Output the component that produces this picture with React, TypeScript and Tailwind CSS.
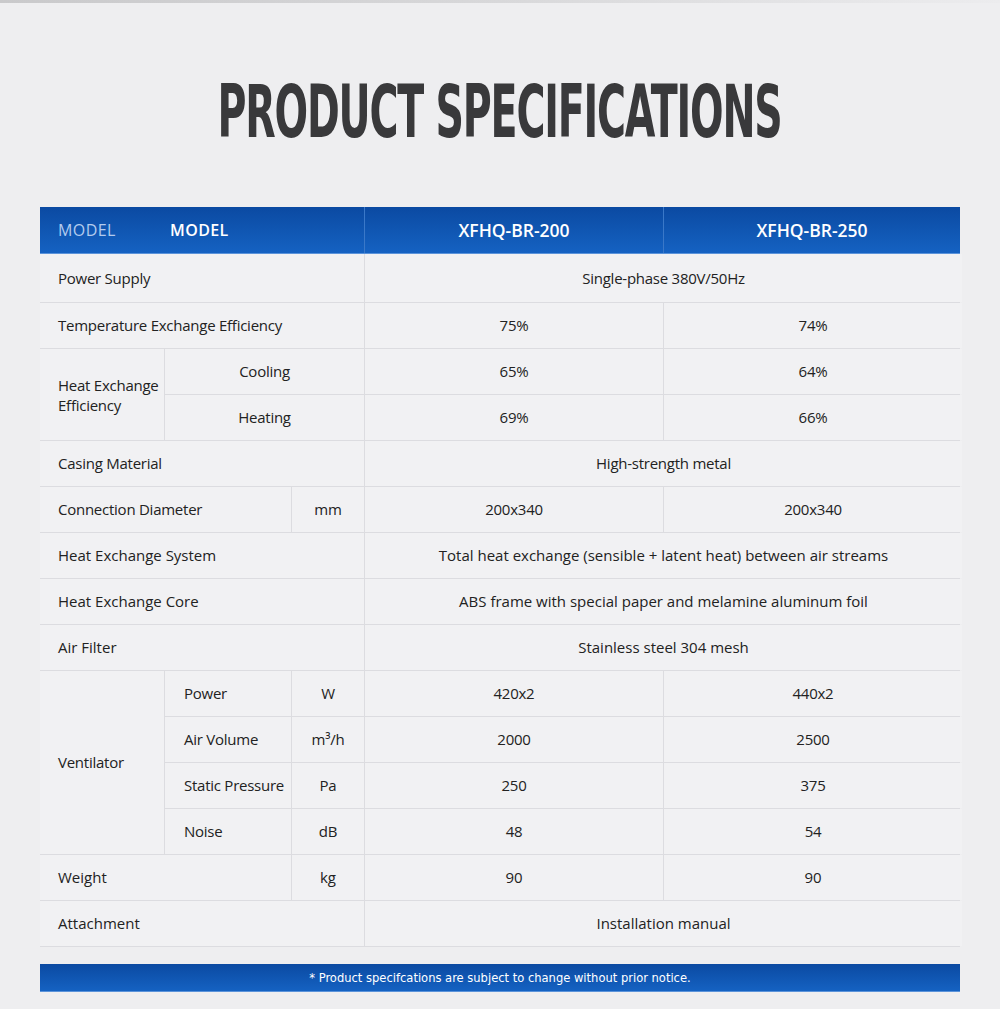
import React from "react";

const body = "font-['Open_Sans','Noto_Sans',sans-serif]";

type CellProps = {
  className?: string;
  children?: React.ReactNode;
};

const Cell = ({ className = "", children }: CellProps) => (
  <div className={`flex items-center bg-[#f1f1f3] text-[15px] tracking-[-0.25px] text-[#222] ${className}`}>
    {children}
  </div>
);

const Label = ({ className = "", children }: CellProps) => (
  <Cell className={`pl-[18px] ${className}`}>{children}</Cell>
);

const Center = ({ className = "", children }: CellProps) => (
  <Cell className={`justify-center ${className}`}>{children}</Cell>
);

// darker rows lower in the table
const strong = "font-medium tracking-[0px] text-[#111]";

const App = () => {
  return (
    <div className={`flex h-[1009px] w-[1000px] flex-col bg-[#eeeef0] ${body}`}>
      <div className="h-[3px] w-full bg-gradient-to-r from-[#c9c9cb] via-[#d8d8da] to-[#ececee]" />

      <div className="flex h-[204px] items-center justify-center pt-[12px]">
        <h1 className="inline-block scale-x-[0.602] whitespace-nowrap font-['DejaVu_Sans_Condensed','DejaVu_Sans',sans-serif] text-[73px] font-bold leading-none tracking-[-2px] text-[#39393b]">
          PRODUCT SPECIFICATIONS
        </h1>
      </div>

      <div className="mx-[40px]">
        {/* header */}
        <div className="flex h-[47px] items-center border-b border-[#5b93da] bg-gradient-to-b from-[#0b4aa2] to-[#1562c2] text-white">
          <div className="flex w-[125px] items-center pl-[18px] text-[16px] font-medium tracking-wide text-[#b3cbee]">
            MODEL
          </div>
          <div className="flex h-full w-[200px] items-center border-r border-[#3a78c8] pl-[5px] text-[16px] font-semibold tracking-wide">
            MODEL
          </div>
          <div className="flex h-full w-[299px] items-center justify-center border-r border-[#3a78c8] text-[17.5px] font-semibold">
            XFHQ-BR-200
          </div>
          <div className="flex h-full flex-1 items-center justify-center text-[17.5px] font-semibold">
            XFHQ-BR-250
          </div>
        </div>

        {/* body */}
        <div className="grid h-[693px] grid-cols-[124px_126px_72px_298px_298px] grid-rows-[48px_repeat(14,45px)] gap-px bg-[#dcdce0]">
          <Label className="col-span-3">Power Supply</Label>
          <Center className="col-span-2">Single-phase 380V/50Hz</Center>

          <Label className="col-span-3">Temperature Exchange Efficiency</Label>
          <Center>75%</Center>
          <Center>74%</Center>

          <Label className="row-span-2 leading-[20px]">
            Heat Exchange
            <br />
            Efficiency
          </Label>
          <Center className="col-span-2">Cooling</Center>
          <Center>65%</Center>
          <Center>64%</Center>
          <Center className="col-span-2">Heating</Center>
          <Center>69%</Center>
          <Center>66%</Center>

          <Label className="col-span-3">Casing Material</Label>
          <Center className="col-span-2">High-strength metal</Center>

          <Label className="col-span-2">Connection Diameter</Label>
          <Center>mm</Center>
          <Center>200x340</Center>
          <Center>200x340</Center>

          <Label className={`col-span-3 ${strong}`}>Heat Exchange System</Label>
          <Center className={`col-span-2 ${strong}`}>
            Total heat exchange (sensible + latent heat) between air streams
          </Center>

          <Label className={`col-span-3 ${strong}`}>Heat Exchange Core</Label>
          <Center className={`col-span-2 ${strong}`}>
            ABS frame with special paper and melamine aluminum foil
          </Center>

          <Label className={`col-span-3 ${strong}`}>Air Filter</Label>
          <Center className={`col-span-2 ${strong}`}>Stainless steel 304 mesh</Center>

          <Label className="row-span-4">Ventilator</Label>
          <Cell className="pl-[19px]">Power</Cell>
          <Center>W</Center>
          <Center>420x2</Center>
          <Center>440x2</Center>
          <Cell className="pl-[19px]">Air Volume</Cell>
          <Center>m³/h</Center>
          <Center>2000</Center>
          <Center>2500</Center>
          <Cell className="pl-[19px]">Static Pressure</Cell>
          <Center>Pa</Center>
          <Center>250</Center>
          <Center>375</Center>
          <Cell className="pl-[19px]">Noise</Cell>
          <Center>dB</Center>
          <Center>48</Center>
          <Center>54</Center>

          <Label className={`col-span-2 ${strong}`}>Weight</Label>
          <Center className={strong}>kg</Center>
          <Center className={strong}>90</Center>
          <Center className={strong}>90</Center>

          <Label className={`col-span-3 ${strong}`}>Attachment</Label>
          <Center className={`col-span-2 ${strong}`}>Installation manual</Center>
        </div>
      </div>

      <div className="mx-[40px] mt-[17px] flex h-[28px] items-center justify-center border-b border-[#5b93da] bg-gradient-to-b from-[#0b4aa2] to-[#1562c2]">
        <span className="font-['DejaVu_Sans_Condensed','DejaVu_Sans',sans-serif] text-[12.8px] text-white">
          * Product specifcations are subject to change without prior notice.
        </span>
      </div>
    </div>
  );
};

export default App;
